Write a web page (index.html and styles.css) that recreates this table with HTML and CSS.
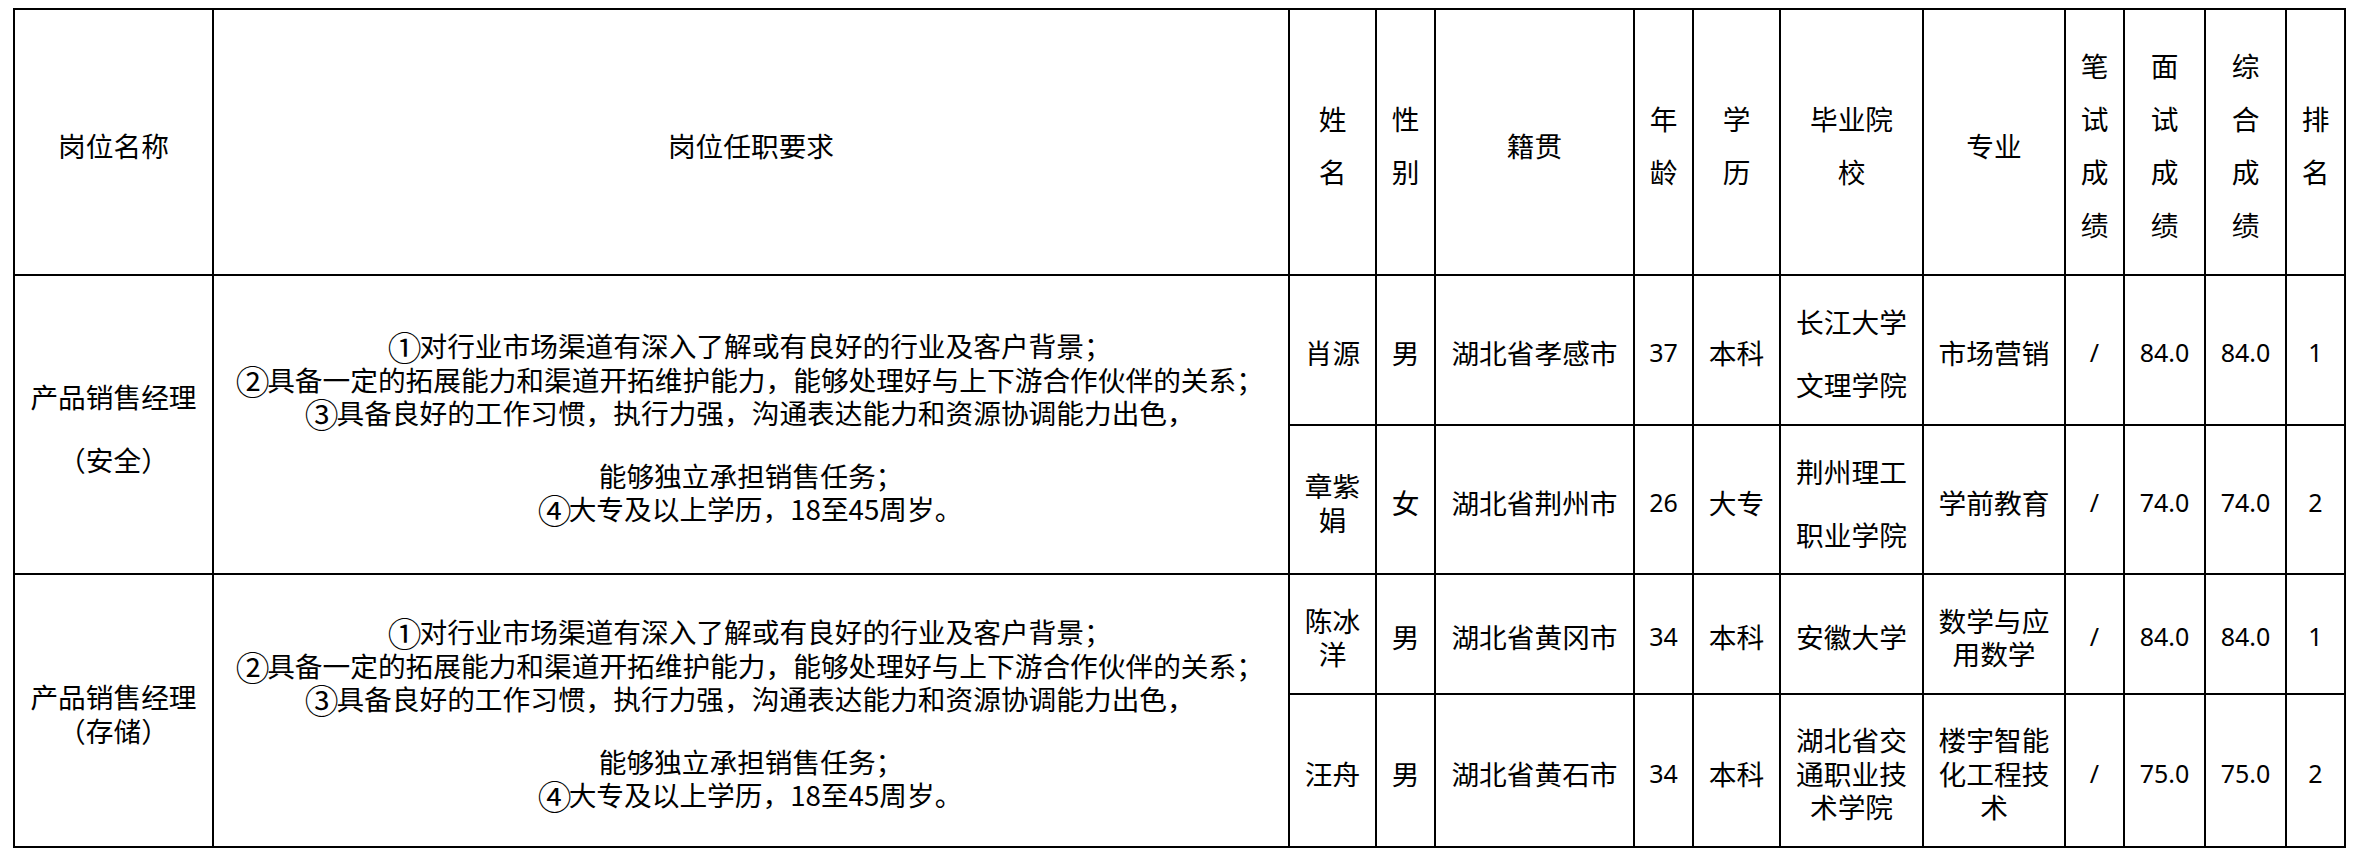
FILE: index.html
```html
<!DOCTYPE html>
<html lang="zh-CN">
<head>
<meta charset="utf-8">
<title>岗位面试成绩</title>
<link rel="stylesheet" href="styles.css">
</head>
<body>
<div class="page">
<table class="roster">
  <colgroup>
    <col class="c-post">
    <col class="c-req">
    <col class="c-name">
    <col class="c-narrow">
    <col class="c-origin">
    <col class="c-narrow">
    <col class="c-edu">
    <col class="c-school">
    <col class="c-major">
    <col class="c-narrow">
    <col class="c-score">
    <col class="c-score">
    <col class="c-narrow">
  </colgroup>
  <thead>
    <tr class="row-head">
      <th>岗位名称</th>
      <th>岗位任职要求</th>
      <th>姓<br>名</th>
      <th>性<br>别</th>
      <th>籍贯</th>
      <th>年<br>龄</th>
      <th>学<br>历</th>
      <th>毕业院<br>校</th>
      <th>专业</th>
      <th>笔<br>试<br>成<br>绩</th>
      <th>面<br>试<br>成<br>绩</th>
      <th>综<br>合<br>成<br>绩</th>
      <th>排<br>名</th>
    </tr>
  </thead>
  <tbody>
    <tr class="row-1">
      <td rowspan="2" class="wide-gap">产品销售经理<br>（安全）</td>
      <td rowspan="2" class="req">
        <div class="req-line"><span class="circ">①</span>对行业市场渠道有深入了解或有良好的行业及客户背景；</div>
        <div class="req-line"><span class="circ">②</span>具备一定的拓展能力和渠道开拓维护能力，能够处理好与上下游合作伙伴的关系；</div>
        <div class="req-line"><span class="circ">③</span>具备良好的工作习惯，执行力强，沟通表达能力和资源协调能力出色，</div>
        <div class="req-gap"></div>
        <div class="req-line">能够独立承担销售任务；</div>
        <div class="req-line"><span class="circ">④</span>大专及以上学历，18至45周岁。</div>
      </td>
      <td>肖源</td>
      <td>男</td>
      <td>湖北省孝感市</td>
      <td class="num">37</td>
      <td>本科</td>
      <td class="wide-gap">长江大学文理学院</td>
      <td>市场营销</td>
      <td class="num">/</td>
      <td class="num">84.0</td>
      <td class="num">84.0</td>
      <td class="num">1</td>
    </tr>
    <tr class="row-2">
      <td>章紫娟</td>
      <td>女</td>
      <td>湖北省荆州市</td>
      <td class="num">26</td>
      <td>大专</td>
      <td class="wide-gap">荆州理工职业学院</td>
      <td>学前教育</td>
      <td class="num">/</td>
      <td class="num">74.0</td>
      <td class="num">74.0</td>
      <td class="num">2</td>
    </tr>
    <tr class="row-3">
      <td rowspan="2">产品销售经理<br>（存储）</td>
      <td rowspan="2" class="req">
        <div class="req-line"><span class="circ">①</span>对行业市场渠道有深入了解或有良好的行业及客户背景；</div>
        <div class="req-line"><span class="circ">②</span>具备一定的拓展能力和渠道开拓维护能力，能够处理好与上下游合作伙伴的关系；</div>
        <div class="req-line"><span class="circ">③</span>具备良好的工作习惯，执行力强，沟通表达能力和资源协调能力出色，</div>
        <div class="req-gap"></div>
        <div class="req-line">能够独立承担销售任务；</div>
        <div class="req-line"><span class="circ">④</span>大专及以上学历，18至45周岁。</div>
      </td>
      <td>陈冰洋</td>
      <td>男</td>
      <td>湖北省黄冈市</td>
      <td class="num">34</td>
      <td>本科</td>
      <td>安徽大学</td>
      <td>数学与应用数学</td>
      <td class="num">/</td>
      <td class="num">84.0</td>
      <td class="num">84.0</td>
      <td class="num">1</td>
    </tr>
    <tr class="row-4">
      <td>汪舟</td>
      <td>男</td>
      <td>湖北省黄石市</td>
      <td class="num">34</td>
      <td>本科</td>
      <td>湖北省交通职业技术学院</td>
      <td>楼宇智能化工程技术</td>
      <td class="num">/</td>
      <td class="num">75.0</td>
      <td class="num">75.0</td>
      <td class="num">2</td>
    </tr>
  </tbody>
</table>
</div>
</body>
</html>
```

FILE: styles.css
```css
html, body {
  margin: 0;
  padding: 0;
  background: #ffffff;
}

.page {
  padding: 8px 0 0 13px;
}

.roster {
  border-collapse: collapse;
  table-layout: fixed;
  width: 2333px;
  font-family: "Noto Sans CJK SC", "Noto Sans", sans-serif;
  font-size: 27.7px;
  color: #000000;
}

.c-post { width: 199px; }
.c-req { width: 1076px; }
.c-name { width: 87px; }
.c-narrow { width: 59px; }
.c-origin { width: 199px; }
.c-edu { width: 87px; }
.c-school { width: 143px; }
.c-major { width: 142px; }
.c-score { width: 81px; }

.roster th,
.roster td {
  border: 2px solid #000000;
  padding: 6px 8px 0;
  text-align: center;
  vertical-align: middle;
  font-weight: 400;
  line-height: 33.5px;
}

.row-head th {
  line-height: 53px;
}

.row-head { height: 266px; }
.row-1 { height: 150px; }
.row-2 { height: 149px; }
.row-3 { height: 120px; }
.row-4 { height: 153px; }

.roster td.wide-gap {
  line-height: 63px;
}

.roster td.req {
  padding-left: 4px;
  padding-right: 4px;
}

.req-line {
  white-space: nowrap;
}

.circ {
  display: inline-block;
  width: 1.05em;
  line-height: 1;
  transform: scale(1.22) translateY(1px);
}

.req-gap {
  height: 29px;
}

.roster td.num {
  font-family: "Noto Sans", "Noto Sans CJK SC", sans-serif;
  font-size: 25px;
}
```
